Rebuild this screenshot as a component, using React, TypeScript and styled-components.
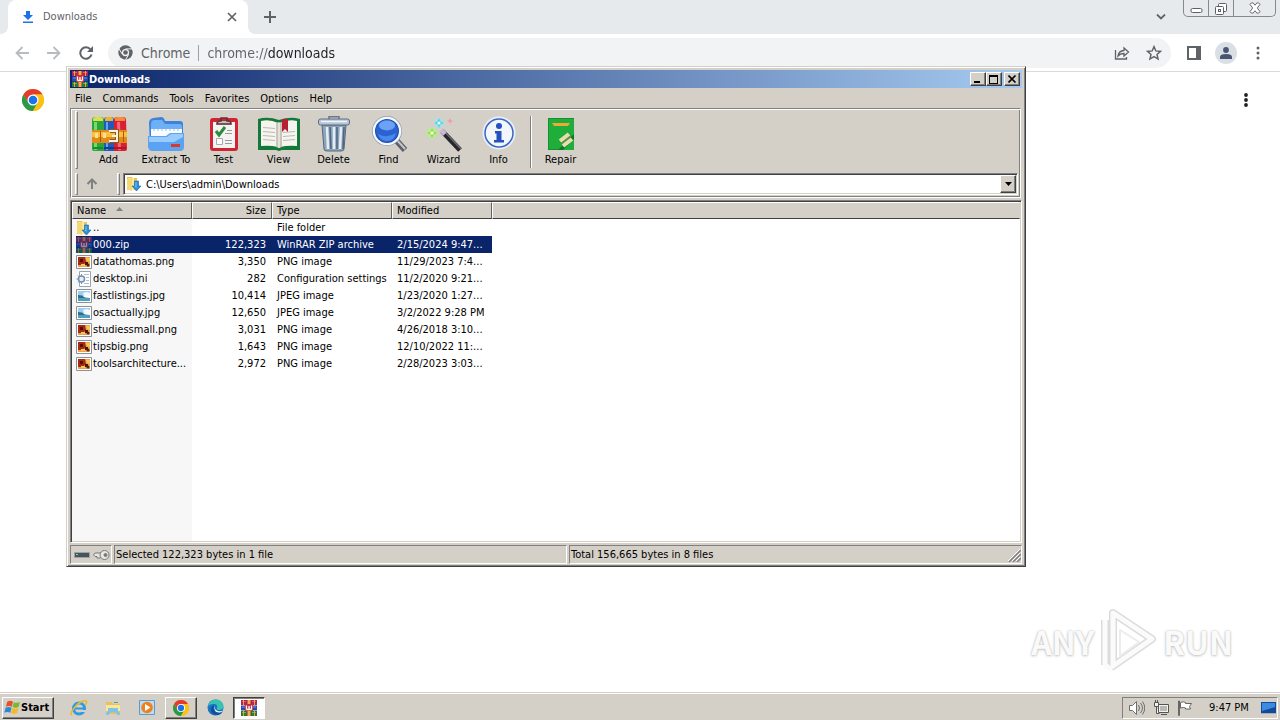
import React from "react";
import styled, { createGlobalStyle, css } from "styled-components";

const uiFont = `Tahoma, "DejaVu Sans Condensed", "DejaVu Sans", sans-serif`;

const GlobalStyle = createGlobalStyle`
  *, *::before, *::after { box-sizing: border-box; }
  body { margin: 0; background: #fff; font-family: ${uiFont}; font-size: 11px; line-height: 14px; color: #000; }
  button, input { font: inherit; color: inherit; margin: 0; padding: 0; border: 0; background: none; }
  svg { display: block; flex: none; }
`;

/* ---------- shared bevels ---------- */

const raised = css`
  border: 1px solid;
  border-color: #fff #404040 #404040 #fff;
  box-shadow: inset -1px -1px 0 #808080;
  background: #d4d0c8;
`;

const sunken = css`
  border: 1px solid;
  border-color: #808080 #fff #fff #808080;
`;

/* ---------- desktop ---------- */

const Desktop = styled.div`
  position: relative;
  display: flex;
  flex-direction: column;
  min-height: 100vh;
  overflow: hidden;
`;

/* ---------- browser ---------- */

const Browser = styled.main`
  flex: 1;
  display: flex;
  flex-direction: column;
`;

const TabStrip = styled.div`
  display: flex;
  align-items: flex-start;
  height: 34px;
  padding-left: 8px;
  background: #e7eaed;
`;

const Tab = styled.div`
  position: relative;
  display: flex;
  align-items: center;
  width: 240px;
  height: 34px;
  padding: 0 8px 0 14px;
  gap: 9px;
  border-radius: 8px 8px 0 0;
  background: #fff;
  color: #5f6368;
  &::before,
  &::after {
    content: "";
    position: absolute;
    bottom: 0;
    width: 8px;
    height: 8px;
  }
  &::before {
    left: -8px;
    background: radial-gradient(circle at 0 0, transparent 8px, #fff 8px);
  }
  &::after {
    right: -8px;
    background: radial-gradient(circle at 100% 0, transparent 8px, #fff 8px);
  }
`;

const TabTitle = styled.span`
  flex: 1;
  font-size: 11px;
`;

const IconButton = styled.button<{ $w?: number; $h?: number }>`
  display: flex;
  align-items: center;
  justify-content: center;
  width: ${(p) => p.$w ?? 16}px;
  height: ${(p) => p.$h ?? 16}px;
`;

const Spacer = styled.div`
  flex: 1;
`;

const WindowControls = styled.div`
  display: flex;
  width: 93px;
  height: 17px;
  margin: 0 4px 0 14px;
  border: 1px solid #85898d;
  border-top: 0;
  border-radius: 0 0 5px 5px;
`;

const WindowControl = styled.button<{ $grow?: number }>`
  flex: ${(p) => p.$grow ?? 25} 1 0;
  display: flex;
  align-items: center;
  justify-content: center;
  & + & {
    border-left: 1px solid #85898d;
  }
`;

const AddressRow = styled.div`
  display: flex;
  align-items: center;
  height: 38px;
  padding: 0 10px;
  gap: 8px;
  border-bottom: 1px solid #d9dadc;
`;

const Omnibox = styled.label`
  flex: 1;
  display: flex;
  align-items: center;
  height: 30px;
  margin: 0 3px 0 2px;
  padding: 0 5px 0 10px;
  gap: 8px;
  border-radius: 15px;
  background: #f1f3f4;
  color: #5f6368;
  font-size: 14px;
  line-height: 18px;
`;

const OmniDivider = styled.span`
  width: 1px;
  height: 16px;
  background: #9aa0a6;
`;

const UrlInput = styled.input`
  flex: 1;
  min-width: 0;
  height: 20px;
  outline: 0;
  color: transparent;
  background: linear-gradient(to right, #5f6368 61px, #202124 61px);
  background-clip: text;
  -webkit-background-clip: text;
`;

const Avatar = styled.span`
  display: flex;
  align-items: center;
  justify-content: center;
  width: 22px;
  height: 22px;
  border-radius: 50%;
  background: #dadfe6;
`;

const PageHeader = styled.header`
  display: flex;
  align-items: center;
  justify-content: space-between;
  height: 56px;
  padding: 0 26px 0 22px;
`;

/* ---------- WinRAR window ---------- */

const AppWindow = styled.section`
  position: absolute;
  left: 66px;
  top: 66px;
  width: 75vw;
  min-width: 640px;
  padding: 3px 3px 2px;
  border: 1px solid;
  border-color: #d4d0c8 #404040 #404040 #d4d0c8;
  box-shadow: inset 1px 1px 0 #fff, inset -1px -1px 0 #808080;
  background: #d4d0c8;
`;

const TitleBar = styled.header`
  display: flex;
  align-items: center;
  height: 18px;
  padding: 0 2px 0 2px;
  background: linear-gradient(to right, #0a246a, #a6caf0);
  color: #fff;
`;

const WindowTitle = styled.h1`
  flex: 1;
  margin: 0;
  padding: 2px 0 0 1px;
  font-size: 11px;
  line-height: 16px;
  font-weight: 700;
`;

const CaptionButton = styled.button<{ $gap?: boolean }>`
  ${raised}
  display: flex;
  align-items: center;
  justify-content: center;
  width: 16px;
  height: 14px;
  margin-left: ${(p) => (p.$gap ? 2 : 0)}px;
`;

const MenuBar = styled.nav`
  display: flex;
  height: 20px;
  padding-left: 5px;
  gap: 11px;
`;

const MenuItem = styled.button`
  height: 20px;
  padding-top: 1px;
`;

const Rebar = styled.div`
  margin-right: 1px;
  padding: 2px 2px 2px 4px;
  border: 1px solid #808080;
  border-right-color: #fff;
  border-bottom-color: #fff;
  box-shadow: inset 1px 1px 0 #fff, inset -1px -1px 0 #808080;
`;

const Band = styled.div`
  display: flex;
`;

const Grip = styled.span<{ $h: number }>`
  width: 3px;
  height: ${(p) => p.$h}px;
  border: 1px solid;
  border-color: #fff #808080 #808080 #fff;
`;

const Tools = styled.div`
  display: flex;
  height: 62px;
  padding: 5px 0 0 3px;
`;

const ToolButton = styled.button<{ $w?: number }>`
  display: flex;
  flex-direction: column;
  align-items: center;
  gap: 1px;
  width: ${(p) => p.$w ?? 55}px;
  height: 51px;
  white-space: nowrap;
`;

const ToolSeparator = styled.span`
  width: 2px;
  height: 52px;
  margin: 0 1px 0 4px;
  border-left: 1px solid #808080;
  border-right: 1px solid #fff;
`;

const UpButton = styled.button`
  display: flex;
  align-items: center;
  justify-content: center;
  width: 28px;
  height: 22px;
  margin-right: 11px;
`;

const PathBox = styled.div`
  flex: 1;
  display: flex;
  align-items: center;
  height: 22px;
  margin-left: 3px;
  padding: 1px 1px 1px 2px;
  gap: 3px;
  ${sunken}
  box-shadow: inset 1px 1px 0 #404040, inset -1px -1px 0 #d4d0c8;
  background: #fff;
`;

const PathInput = styled.input`
  flex: 1;
  height: 16px;
  padding-left: 1px;
  padding-top: 1px;
  outline: 0;
`;

const DropButton = styled.button`
  ${raised}
  display: flex;
  align-items: center;
  justify-content: center;
  width: 16px;
  height: 18px;
`;

const ListPane = styled.div`
  height: 343px;
  margin-top: 2px;
  padding: 1px;
  border: 1px solid;
  border-color: #808080 #fff #fff #808080;
  box-shadow: inset 1px 1px 0 #404040, inset -1px -1px 0 #d4d0c8;
  background: linear-gradient(to right, #f7f7f7 121px, #fff 121px);
`;

const FileTable = styled.table`
  width: 100%;
  table-layout: fixed;
  border-collapse: separate;
  border-spacing: 0;
`;

const HeadCell = styled.th<{ $right?: boolean }>`
  height: 17px;
  padding: 1px 5px 0 4px;
  font-weight: 400;
  line-height: 14px;
  text-align: ${(p) => (p.$right ? "right" : "left")};
  background: #d4d0c8;
  border: 1px solid;
  border-color: #fff #606060 #404040 #fff;
  svg {
    display: inline-block;
    margin: 0 0 3px 10px;
  }
  &:last-child {
    border-right-color: #d4d0c8;
  }
`;

const Row = styled.tr<{ $selected?: boolean }>`
  ${(p) =>
    p.$selected &&
    css`
      color: #fff;
      td:not(:last-child) {
        background: #0a246a;
      }
      td:first-child {
        background: linear-gradient(to right, transparent 4px, #0a246a 4px);
      }
    `}
`;

const Cell = styled.td<{ $right?: boolean }>`
  height: 17px;
  padding: 1px ${(p) => (p.$right ? 6 : 3)}px 0 5px;
  line-height: 16px;
  overflow: hidden;
  text-overflow: ellipsis;
  white-space: nowrap;
  text-align: ${(p) => (p.$right ? "right" : "left")};
`;

const NameCell = styled(Cell)`
  padding: 0 4px;
`;

const FileName = styled.span`
  display: flex;
  align-items: center;
  gap: 1px;
  height: 17px;
  span {
    padding-top: 1px;
    overflow: hidden;
    text-overflow: ellipsis;
  }
`;

const StatusBar = styled.footer`
  display: flex;
  height: 21px;
  padding-top: 2px;
  gap: 2px;
`;

const StatusPanel = styled.div<{ $w?: number }>`
  ${sunken}
  flex: ${(p) => (p.$w ? `0 0 ${p.$w}px` : "1 1 0")};
  display: flex;
  align-items: center;
  justify-content: space-between;
  height: 19px;
  padding: 1px 0 0 1px;
`;

const StatusIcons = styled(StatusPanel)`
  justify-content: flex-start;
  gap: 3px;
  padding: 0 0 0 3px;
`;

/* ---------- watermark ---------- */

const Watermark = styled.div`
  position: absolute;
  right: 47px;
  bottom: 46px;
  display: flex;
  align-items: center;
  gap: 5px;
  font-family: "Noto Sans CJK JP", "Liberation Sans", sans-serif;
  font-size: 32px;
  line-height: 66px;
  font-weight: 700;
  color: #fafafa;
  text-shadow: 0 0 2px #bbb, 0 1px 3px #ccc;
`;

/* ---------- taskbar ---------- */

const Taskbar = styled.footer`
  display: flex;
  align-items: center;
  height: 28px;
  padding: 2px 2px 0;
  border-top: 1px solid #d4d0c8;
  box-shadow: inset 0 1px 0 #fff;
  background: #d4d0c8;
`;

const StartButton = styled.button`
  ${raised}
  display: flex;
  align-items: center;
  width: 52px;
  height: 22px;
  margin-right: 9px;
  padding-left: 1px;
  font-weight: 700;
`;

const TaskButton = styled.button<{ $state?: "open" | "active" }>`
  display: flex;
  align-items: center;
  justify-content: center;
  width: 32px;
  height: 22px;
  margin-right: 2px;
  ${(p) => p.$state === "open" && raised}
  ${(p) =>
    p.$state === "active" &&
    css`
      border: 1px solid;
      border-color: #404040 #fff #fff #404040;
      box-shadow: inset 1px 1px 0 #808080;
      background: #fff;
    `}
`;

const Tray = styled.div`
  ${sunken}
  display: flex;
  align-items: center;
  width: 156px;
  height: 22px;
  padding: 0 0 0 6px;
  gap: 8px;
`;

const Clock = styled.time`
  flex: 1;
  padding-left: 8px;
  white-space: nowrap;
`;

/* ---------- icons ---------- */

const ChromeLogo = ({ size }: { size: number }) => (
  <svg width={size} height={size} viewBox="0 0 24 24">
    <circle cx="12" cy="12" r="12" fill="#fbc116" />
    <path d="M12 6h10.4A12 12 0 0 0 1.6 6l5.2 9Z" fill="#e33b2e" />
    <path d="M1.6 6A12 12 0 0 0 12 24l5.2-9L12 12 6.8 15Z" fill="#2a9a48" />
    <path d="M12 24A12 12 0 0 0 22.4 6H12l5.2 9Z" fill="#fbc116" />
    <circle cx="12" cy="12" r="6" fill="#fff" />
    <circle cx="12" cy="12" r="4.7" fill="#1a73e8" />
  </svg>
);

const ChromeMono = () => (
  <svg width="15" height="15" viewBox="0 0 24 24">
    <circle cx="12" cy="12" r="11.5" fill="#5f6368" />
    <circle cx="12" cy="12" r="5.8" fill="#f1f3f4" />
    <circle cx="12" cy="12" r="3.7" fill="#5f6368" />
    <path d="M12 6.2h11M7 15 1.6 6M17 15l-5 9" stroke="#f1f3f4" strokeWidth="1.6" />
  </svg>
);

const Dots = ({ color, r, step }: { color: string; r: number; step: number }) => (
  <svg width="16" height="16" viewBox="0 0 16 16" fill={color}>
    <circle cx="8" cy={8 - step} r={r} />
    <circle cx="8" cy="8" r={r} />
    <circle cx="8" cy={8 + step} r={r} />
  </svg>
);

const WinRar = ({ dark }: { dark?: boolean }) => (
  <svg width="16" height="16" viewBox="0 0 16 16">
    <path fill="#b2225a" d="M0 0h16v5H0z" />
    <path fill="#2b49b0" d="M0 5.5h16v5H0z" />
    <path fill="#257a35" d="M0 11h16v5H0z" />
    <path fill="#e05a8a" d="M1 1h4v1H1zM11 1h4v1h-4z" />
    <path fill="#6d8bea" d="M1 6.5h3v1H1zM12 6.5h3v1h-3z" />
    <path fill="#62b85e" d="M1 12h4v1H1zM11 12h4v1h-4z" />
    <path fill="#f0a62c" d="M2 0h1v5H2zM13 0h1v5h-1zM2 11h1v5H2zM13 11h1v5h-1z" />
    <path fill="#d8642e" d="M6 0h4v16H6z" />
    <path fill="#f2b04a" d="M7 0h2v16H7z" />
    <rect x="4" y="4" width="8" height="7" rx="1" fill="#c22f35" />
    <path d="M5.5 5.5v4M8 6v4M10.5 5.5v4M5.5 9.5h5" stroke="#fff" strokeWidth="1.3" fill="none" />
    {dark && <path fill="#0a246a" opacity=".5" d="M0 0h16v16H0z" />}
  </svg>
);

const FolderDown = () => (
  <svg width="16" height="16" viewBox="0 0 16 16">
    <path fill="#e9c553" d="M1 1h5l1 1h4v12H1z" />
    <path fill="#fbe799" d="M2 2h6v12H2z" />
    <path fill="#f5d873" d="M1 3l5-1v13l-5-2z" />
    <path fill="#2b8fd6" stroke="#1668a8" strokeWidth=".6" d="M8.5 5h4v5H15l-4.500 5L6 10h2.500z" />
    <path fill="#7cc4f2" d="M9.500 6h1v6l-2-2h1z" />
  </svg>
);

const PngIcon = () => (
  <svg width="16" height="16" viewBox="0 0 16 16">
    <path fill="#fff" stroke="#8b9199" d="M.5 1.5h15v13H.5z" />
    <path fill="#e9a05a" d="M2 3h12v10H2z" />
    <path fill="#a8290f" d="M2 3h7l1 5-3 3H2z" />
    <path fill="#4c1408" d="M4 5h3v3H4zM9 8h3v3H9z" />
    <path fill="#f6c94e" d="M10 4h4v4l-3-1zM5 10h4v2H5z" />
    <circle cx="12" cy="11" r="1.5" fill="#54210c" />
  </svg>
);

const JpgIcon = () => (
  <svg width="16" height="16" viewBox="0 0 16 16">
    <path fill="#fff" stroke="#8b9199" d="M.5 1.5h15v13H.5z" />
    <path fill="#9fcdf0" d="M2 3h12v5H2z" />
    <path fill="#f4fafc" d="M7 5l4-1 3 1v3H8z" />
    <path fill="#2d6f8e" d="M2 7l4 .5 3 2 5 .5v1H2z" />
    <path fill="#4fa0bd" d="M2 10h12v3H2z" />
  </svg>
);

const IniIcon = () => (
  <svg width="16" height="16" viewBox="0 0 16 16">
    <path fill="#fff" stroke="#98a4b0" d="M3.5.5h11v15h-11z" />
    <path stroke="#a9bfd5" d="M8 3.5h5M10 6.5h3M10 9.5h3M8 12.5h5" />
    <circle cx="5.5" cy="8" r="3" fill="#e8f0f7" stroke="#6f8fae" strokeWidth="1.5" />
    <path stroke="#6f8fae" d="M5.5 3v2M5.5 11v2M.5 8h2M2 4.5 3.5 6M2 11.500 3.500 10" />
  </svg>
);

const AddIcon = () => (
  <svg width="36" height="36" viewBox="0 0 36 36">
    <path fill="#2ba63c" d="M1 4q0-3 3-3h6q3 0 3 3v31H3q-2 0-2-2z" />
    <path fill="#77d96a" d="M3 6h3v28H3z" />
    <path fill="#2359b8" d="M13 4q0-3 3-3h4q3 0 3 3v31H13z" />
    <path fill="#63a4ee" d="M15 6h2v28h-2z" />
    <path fill="#d81f33" d="M23 4q0-3 3-3h6q3 0 3 3l1 29q0 2-2 2H23z" />
    <path fill="#f5677a" d="M26 6h3l1 28h-3z" />
    <path fill="#d9e04a" d="M2 3q0-2 3-2h4q3 0 3 2v2H2z" />
    <path fill="#f0b030" d="M14 3q0-2 2-2h4q2 0 2 2v2h-8z" />
    <path fill="#f78d3a" d="M24 3q0-2 2-2h5q3 0 3 2v2H24z" />
    <path fill="#e48a16" d="M1 14h35v13H1z" />
    <path fill="#f9bf44" d="M1 16h35v5H1z" />
    <path fill="#fbe08a" d="M4 17h3v5H4zM12 17h3v5h-3z" />
    <path fill="#a85a0b" d="M9 15h1v11H9zM32 15h1v11h-1z" />
    <path fill="none" stroke="#8a5a24" strokeWidth="4" d="M19 15h7v10h-7" />
    <path fill="none" stroke="#f8f2e0" strokeWidth="2" d="M18 15h8v10h-8M21 20h6" />
    <path fill="#1c8a2c" d="M2 31h10v2H2z" />
    <path fill="#153e8a" d="M13 31h10v2H13z" />
    <path fill="#b01527" d="M23 31h12v2H23z" />
  </svg>
);

const ExtractIcon = () => (
  <svg width="38" height="36" viewBox="0 0 38 36">
    <path fill="#3d83dc" d="M2 7q0-4 4-5l8-1q3 0 4 4h15q3 0 3 3v22H3z" />
    <path fill="#6db0f5" d="M4 8q0-4 4-4h7l3 4h15q2 0 2 3v5H4z" />
    <path fill="#f8fbff" d="M4 13h31v8H4z" />
    <path stroke="#a8bdd8" strokeWidth="1" d="M7 13v2M11 13v2M15 13v2M19 13v2M23 13v2M27 13v2M31 13v2" />
    <path fill="#5ba3f2" d="M1 20h18l4-3h14v14q0 4-4 4H5q-3 0-4-4z" />
    <path fill="#9accfb" d="M2 21h18l4-3h12v3l-9 5H2z" />
    <rect x="24" y="28" width="9" height="3" fill="#d8392b" />
  </svg>
);

const TestIcon = () => (
  <svg width="30" height="36" viewBox="0 0 30 36">
    <rect x="1" y="2" width="28" height="33" rx="3" fill="#cf2434" />
    <path fill="#f3f3f2" d="M4 6h22v26H4z" />
    <path fill="#bfc0c2" d="M7 9q0-4 3-4h10q3 0 3 4z" />
    <path fill="none" stroke="#5d3438" strokeWidth="1.5" d="M8 8q0-3 3-3h1V2h6v3h1q3 0 3 3z" />
    <path fill="none" stroke="#2c8b3c" strokeWidth="3" d="m7 15 3 4 6-8" />
    <path fill="#fff" stroke="#aaa" d="M7.5 22.5h6v6h-6z" />
    <path stroke="#9a9a9a" d="M16 17.5h7M18 14.5h5M16 24.5h7M16 27.5h7" />
  </svg>
);

const ViewIcon = () => (
  <svg width="42" height="36" viewBox="0 0 42 36">
    <path fill="#13793a" d="M0 3q10-3 21 1 11-4 21-1v31H24l-3 1-3-1H0z" />
    <path fill="#f6f4ee" d="M3 5q9-2 17 2v24q-8-2-17-1z" />
    <path fill="#f6f4ee" d="M39 5q-9-2-17 2v24q8-2 17-1z" />
    <path fill="#c9c4b8" d="M18 6l3 1 3-1v25l-3 1-3-1z" />
    <path stroke="#fff" d="M21 6v26" />
    <path fill="none" stroke="#b9b9b5" d="M5 11.500l12 1M5 15.500l12 1M5 19.500l12 1M5 23.500l12 1M25 16.500l12-1M25 20.500l12-1M25 24.500l12-1" />
    <path fill="#b62030" d="M24 3h6v13l-3-3-3 3z" />
  </svg>
);

const DeleteIcon = () => (
  <svg width="34" height="36" viewBox="0 0 34 36">
    <path fill="none" stroke="#6b7789" strokeWidth="1.5" d="M12 3V.8h10V3" />
    <path fill="#8fa5bc" stroke="#56687e" d="M5 9h24l-2 24q0 2-3 2H10q-3 0-3-2z" />
    <path stroke="#e3edf6" strokeWidth="2.5" d="m10 11 1 22M17 11v22M24 11l-1 22" />
    <path stroke="#50647d" strokeWidth="1.5" d="m13 11 1 22M20 11v22M27 11l-1 22" />
    <rect x="1.5" y="3" width="31" height="6" rx="2" fill="#b7c5d4" stroke="#5c6d82" />
    <path stroke="#eff5fa" strokeWidth="1.5" d="M4 5.500h26" />
  </svg>
);

const FindIcon = () => (
  <svg width="36" height="36" viewBox="0 0 36 36">
    <path stroke="#5c6066" strokeWidth="6" d="m25 24 9 10" />
    <path stroke="#c4c8cb" strokeWidth="2" d="m25 23 9 10" />
    <circle cx="16" cy="15" r="15" fill="#8d9db4" />
    <circle cx="16" cy="15" r="14.3" fill="#f6f9fc" />
    <circle cx="16" cy="15" r="12" fill="#1d4fb5" />
    <circle cx="16" cy="15" r="11" fill="#2a62d2" />
    <ellipse cx="16" cy="9.500" rx="8" ry="5" fill="#6ba2f4" />
    <path fill="#4a88ec" d="M7 18q9 5 18-1-2 8-9 8T7 18z" />
  </svg>
);

const WizardIcon = () => (
  <svg width="36" height="36" viewBox="0 0 36 36">
    <circle cx="13" cy="7" r="5" fill="#92e7f2" opacity=".6" />
    <path fill="#52d3ea" d="m13 2 1.5 3.5L18 7l-3.500 1.500L13 12l-1.500-3.500L8 7l3.500-1.500z" />
    <circle cx="6" cy="17" r="5.500" fill="#b6ef86" opacity=".8" />
    <path fill="#8bdc46" d="m6 12 1.500 3.500L11 17l-3.500 1.500L6 22l-1.500-3.500L1 17l3.500-1.500z" />
    <circle cx="6" cy="17" r="1.800" fill="#f2ffe0" />
    <circle cx="13" cy="7" r="1.500" fill="#f0feff" />
    <path fill="#f49ba4" d="m24 2 1 2 2 1-2 1-1 2-1-2-2-1 2-1z" />
    <path stroke="#27252c" strokeWidth="5" d="m16 15 18 19" />
    <path stroke="#6d6974" strokeWidth="1.5" d="m17 14 18 19" />
    <path stroke="#c9b7d3" strokeWidth="5" d="m15 14 4 4" />
  </svg>
);

const InfoIcon = () => (
  <svg width="34" height="36" viewBox="0 0 34 36">
    <circle cx="17" cy="17" r="16.5" fill="#e8effa" />
    <circle cx="17" cy="17" r="14" fill="#f2f6fd" stroke="#3a68c0" strokeWidth="1.5" />
    <circle cx="17" cy="10" r="3" fill="#2451bd" />
    <path fill="#2451bd" d="M13 15h6.500v9H22v2.500H12V24h2.500v-6.500H13z" />
  </svg>
);

const RepairIcon = () => (
  <svg width="26" height="36" viewBox="0 0 26 36">
    <path fill="#1fae3a" d="M0 2h26v32H0z" />
    <path fill="#149030" d="M0 2h26v1H0zM0 33h26v1H0zM0 3h1v30H0z" />
    <path fill="#0d7a24" d="m10 34 16-16v16z" />
    <path fill="#1fae3a" d="m15 34 11-11v11z" />
    <path fill="#f0a83a" d="M4 7h18l-2 3H6z" />
    <path stroke="#e8dcb0" strokeWidth="4" d="m12 25 9-7M15 30l9-7" />
    <path stroke="#8d7b3e" strokeWidth="1" d="m13 28 10-8" />
  </svg>
);

const WindowsFlag = () => (
  <svg width="17" height="17" viewBox="0 0 16 16">
    <path fill="#e5532a" d="M3 2.5q3-1.500 5.500 0L7.300 7.200q-2.600-1.400-5.500 0z" />
    <path fill="#79b82c" d="M9.300 3q2.700 1.200 5.700-.2L13.700 7.500q-2.800 1.300-5.600 0z" />
    <path fill="#2f87d8" d="M1.500 8.200q2.900-1.500 5.600 0l-1.200 4.700q-2.700-1.400-5.600 0z" />
    <path fill="#f6b922" d="M7.900 8.500q2.700 1.300 5.600 0l-1.200 4.700q-2.900 1.300-5.600 0z" />
  </svg>
);

const IeIcon = () => (
  <svg width="18" height="18" viewBox="0 0 18 18">
    <circle cx="9" cy="9.500" r="5.500" fill="none" stroke="#2f9be2" strokeWidth="3" />
    <path fill="#d4d0c8" d="M10 11h7v2h-7z" />
    <path fill="#2f9be2" d="M5 8.500h10.500v2H5z" />
    <path fill="none" stroke="#e8b931" strokeWidth="1.5" d="M2 16Q-1 15 5 8T16 2q2 1-1 4" />
  </svg>
);

const ExplorerIcon = () => (
  <svg width="18" height="18" viewBox="0 0 18 18">
    <path fill="#e4c25c" d="M2 3h6l1 2h7v10H2z" />
    <path fill="#f9e6a0" d="M2 6h14v6H2z" />
    <path fill="#7fc3e8" d="M4 9h10v3q2 1 2 4h-3q0-3-4-3t-4 3H2q0-3 2-4z" />
    <path fill="#5aa55f" d="M10 3h4v1h-4z" />
  </svg>
);

const MediaIcon = () => (
  <svg width="17" height="17" viewBox="0 0 17 17">
    <path fill="#bcdcf2" stroke="#5d9cca" d="M.5 1.500h15v14H.5z" />
    <circle cx="8" cy="8.500" r="5.800" fill="#f0801c" />
    <path fill="#fff" d="m6 5 5.500 3.500L6 12z" />
  </svg>
);

const EdgeIcon = () => (
  <svg width="17" height="17" viewBox="0 0 17 17">
    <circle cx="8.500" cy="8.500" r="8" fill="#1a73c7" />
    <path fill="#37c2b1" d="M.7 8Q2 1 9 .6q7 .4 7.500 6.900-.5 3.500-4.500 3.500-3 0-2-2 1-4-3-4Q2 5 .7 8z" />
    <path fill="#124f96" d="M7 6q-4 2-3 6t7 4q3-.6 4.500-3-4 1.500-7-1T7 6z" />
    <path fill="#e6f4f8" d="M8 7q-1 4 3 5 3 .6 5-.5-1 1.500-3 2Q8 14 7.500 10 7 8 8 7z" />
  </svg>
);

const line = { fill: "none", stroke: "#5f6368" };

/* ---------- data ---------- */

const menus = ["File", "Commands", "Tools", "Favorites", "Options", "Help"];

const tools = [
  { label: "Add", icon: <AddIcon /> },
  { label: "Extract To", icon: <ExtractIcon />, w: 60 },
  { label: "Test", icon: <TestIcon /> },
  { label: "View", icon: <ViewIcon /> },
  { label: "Delete", icon: <DeleteIcon /> },
  { label: "Find", icon: <FindIcon /> },
  { label: "Wizard", icon: <WizardIcon /> },
  { label: "Info", icon: <InfoIcon /> },
];

const files = [
  { name: "..", size: "", type: "File folder", date: "", icon: <FolderDown /> },
  { name: "000.zip", size: "122,323", type: "WinRAR ZIP archive", date: "2/15/2024 9:47...", icon: <WinRar dark />, selected: true },
  { name: "datathomas.png", size: "3,350", type: "PNG image", date: "11/29/2023 7:4...", icon: <PngIcon /> },
  { name: "desktop.ini", size: "282", type: "Configuration settings", date: "11/2/2020 9:21...", icon: <IniIcon /> },
  { name: "fastlistings.jpg", size: "10,414", type: "JPEG image", date: "1/23/2020 1:27...", icon: <JpgIcon /> },
  { name: "osactually.jpg", size: "12,650", type: "JPEG image", date: "3/2/2022 9:28 PM", icon: <JpgIcon /> },
  { name: "studiessmall.png", size: "3,031", type: "PNG image", date: "4/26/2018 3:10...", icon: <PngIcon /> },
  { name: "tipsbig.png", size: "1,643", type: "PNG image", date: "12/10/2022 11:...", icon: <PngIcon /> },
  { name: "toolsarchitecture...", size: "2,972", type: "PNG image", date: "2/28/2023 3:03...", icon: <PngIcon /> },
];

/* ---------- views ---------- */

function BrowserView() {
  return (
    <Browser>
      <TabStrip>
        <Tab>
          <svg width="12" height="12" viewBox="0 0 12 12" fill="#1a73e8">
            <path d="M4 0h4v4h3L6 9 1 4h3zM1 10.500h10V12H1z" />
          </svg>
          <TabTitle>Downloads</TabTitle>
          <IconButton aria-label="Close tab">
            <svg width="10" height="10" viewBox="0 0 10 10" {...line} strokeWidth="1.7">
              <path d="m1 1 8 8M9 1 1 9" />
            </svg>
          </IconButton>
        </Tab>
        <IconButton aria-label="New tab" $w={44} $h={34}>
          <svg width="12" height="12" viewBox="0 0 12 12" {...line} strokeWidth="2">
            <path d="M6 0v12M0 6h12" />
          </svg>
        </IconButton>
        <Spacer />
        <IconButton aria-label="Search tabs" $w={16} $h={34}>
          <svg width="10" height="6" viewBox="0 0 10 6" {...line} strokeWidth="1.8">
            <path d="m1 .5 4 4 4-4" />
          </svg>
        </IconButton>
        <WindowControls>
          <WindowControl aria-label="Minimize">
            <svg width="13" height="16" viewBox="0 0 13 16">
              <rect x="1" y="8.500" width="11" height="4" rx="1.500" fill="#fff" stroke="#5c6066" />
            </svg>
          </WindowControl>
          <WindowControl aria-label="Restore">
            <svg width="14" height="15" viewBox="0 0 14 15" fill="#fff" stroke="#5c6066">
              <rect x="4.500" y="2.500" width="8" height="8" rx="1" />
              <rect x="1.500" y="5.500" width="8" height="8" rx="1" />
              <rect x="4.500" y="8.500" width="2" height="2" />
            </svg>
          </WindowControl>
          <WindowControl aria-label="Close" $grow={42}>
            <svg width="12" height="12" viewBox="0 0 13 13" fill="#fff" stroke="#5c6066">
              <path d="M1 2.500 2.500 1h2l2 2.500 2-2.500h2L12 2.500 9 6.500l3 4-1.500 1.500h-2l-2-2.500-2 2.500h-2L1 10.500l3-4z" />
            </svg>
          </WindowControl>
        </WindowControls>
      </TabStrip>
      <AddressRow>
        <IconButton aria-label="Back" $w={24}>
          <svg width="14" height="14" viewBox="0 0 14 14" fill="none" stroke="#b9bcbf" strokeWidth="1.8">
            <path d="M14 7H1.500M7.500 1l-6 6 6 6" />
          </svg>
        </IconButton>
        <IconButton aria-label="Forward" $w={24}>
          <svg width="14" height="14" viewBox="0 0 14 14" fill="none" stroke="#b9bcbf" strokeWidth="1.8">
            <path d="M0 7h12.500M6.500 1l6 6-6 6" />
          </svg>
        </IconButton>
        <IconButton aria-label="Reload" $w={24}>
          <svg width="14" height="14" viewBox="0 0 14 14" {...line} strokeWidth="2">
            <path d="M11.500 3.500A5.700 5.700 0 1 0 12.500 8.500" />
            <path d="M14 0v6H8z" fill="#5f6368" stroke="none" />
          </svg>
        </IconButton>
        <Omnibox>
          <ChromeMono />
          <span>Chrome</span>
          <OmniDivider />
          <UrlInput aria-label="Address" defaultValue="chrome://downloads" />
          <IconButton aria-label="Share" $w={24}>
            <svg width="16" height="16" viewBox="0 0 16 16" {...line} strokeWidth="1.3">
              <path d="M1.500 5v9h11v-2M4 11q.5-5 6-5.500V3l4.500 4-4.500 4V8.500Q6 8.500 4 11z" />
            </svg>
          </IconButton>
          <IconButton aria-label="Bookmark" $w={24}>
            <svg width="16" height="16" viewBox="0 0 24 24" {...line} strokeWidth="2.2">
              <path d="m12 2.500 2.800 6.400 7 .7-5.300 4.600 1.600 6.900L12 17.500l-6.100 3.600 1.600-6.900L2.200 9.600l7-.7z" />
            </svg>
          </IconButton>
        </Omnibox>
        <IconButton aria-label="Side panel" $w={24}>
          <svg width="14" height="14" viewBox="0 0 14 14">
            <path fill="#fff" stroke="#5f6368" strokeWidth="2" d="M1 1h12v12H1z" />
            <path fill="#5f6368" d="M9 0h5v14H9z" />
          </svg>
        </IconButton>
        <IconButton aria-label="Profile" $w={24} $h={24}>
          <Avatar>
            <svg width="12" height="12" viewBox="0 0 12 12" fill="#4a5573">
              <circle cx="6" cy="3" r="2.900" />
              <path d="M0 12v-2q0-3 6-3t6 3v2z" />
            </svg>
          </Avatar>
        </IconButton>
        <IconButton aria-label="Browser menu" $w={24}>
          <Dots color="#5f6368" r={1.5} step={5} />
        </IconButton>
      </AddressRow>
      <PageHeader>
        <ChromeLogo size={22} />
        <IconButton aria-label="More actions">
          <Dots color="#202124" r={1.9} step={5} />
        </IconButton>
      </PageHeader>
    </Browser>
  );
}

function ArchiverWindow() {
  return (
    <AppWindow>
      <TitleBar>
        <WinRar />
        <WindowTitle>Downloads</WindowTitle>
        <CaptionButton aria-label="Minimize">
          <svg width="8" height="8" viewBox="0 0 8 8">
            <path d="M0 6h6v2H0z" />
          </svg>
        </CaptionButton>
        <CaptionButton aria-label="Maximize">
          <svg width="10" height="9" viewBox="0 0 10 9">
            <path d="M0 0h9v9H0zM1 2v6h7V2z" fillRule="evenodd" />
          </svg>
        </CaptionButton>
        <CaptionButton aria-label="Close" $gap>
          <svg width="9" height="8" viewBox="0 0 9 8">
            <path d="m.5.5 7 7M7.500.5l-7 7" stroke="#000" strokeWidth="1.6" />
          </svg>
        </CaptionButton>
      </TitleBar>
      <MenuBar>
        {menus.map((m) => (
          <MenuItem key={m}>{m}</MenuItem>
        ))}
      </MenuBar>
      <Rebar>
        <Band>
          <Grip $h={58} />
          <Tools>
            {tools.map((t) => (
              <ToolButton key={t.label} $w={t.w}>
                {t.icon}
                {t.label}
              </ToolButton>
            ))}
            <ToolSeparator />
            <ToolButton>
              <RepairIcon />
              Repair
            </ToolButton>
          </Tools>
        </Band>
        <Band>
          <Grip $h={22} />
          <UpButton aria-label="Up one level">
            <svg width="12" height="12" viewBox="0 0 12 12" fill="none" stroke="#808080" strokeWidth="2">
              <path d="M6 11V1.500M1.500 6 6 1.500 10.500 6" />
            </svg>
          </UpButton>
          <Grip $h={22} />
          <PathBox>
            <FolderDown />
            <PathInput aria-label="Path" defaultValue="C:\Users\admin\Downloads" />
            <DropButton aria-label="Show paths">
              <svg width="7" height="4" viewBox="0 0 7 4">
                <path d="M0 0h7L3.500 4z" />
              </svg>
            </DropButton>
          </PathBox>
        </Band>
      </Rebar>
      <ListPane>
        <FileTable>
          <colgroup>
            <col style={{ width: 120 }} />
            <col style={{ width: 80 }} />
            <col style={{ width: 120 }} />
            <col style={{ width: 100 }} />
            <col />
          </colgroup>
          <thead>
            <tr>
              <HeadCell>
                Name
                <svg width="7" height="4" viewBox="0 0 7 4">
                  <path d="M0 4h7L3.500 0z" fill="#808080" />
                </svg>
              </HeadCell>
              <HeadCell $right>Size</HeadCell>
              <HeadCell>Type</HeadCell>
              <HeadCell>Modified</HeadCell>
              <HeadCell aria-hidden="true" />
            </tr>
          </thead>
          <tbody>
            {files.map((f) => (
              <Row key={f.name} $selected={f.selected}>
                <NameCell>
                  <FileName>
                    {f.icon}
                    <span>{f.name}</span>
                  </FileName>
                </NameCell>
                <Cell $right>{f.size}</Cell>
                <Cell>{f.type}</Cell>
                <Cell>{f.date}</Cell>
                <Cell />
              </Row>
            ))}
          </tbody>
        </FileTable>
      </ListPane>
      <StatusBar>
        <StatusIcons $w={42}>
          <svg width="16" height="8" viewBox="0 0 16 8">
            <path fill="#46545b" stroke="#9aa4a8" d="M.5 1.500h15v5H.5z" />
            <path fill="#9ec7ae" d="M2 3h2v1H2z" />
          </svg>
          <svg width="17" height="12" viewBox="0 0 17 12" fill="#e8e8e6" stroke="#777">
            <path d="M8 4H2L.5 6 2 7.500h2V9h3l2-1" />
            <circle cx="11.500" cy="6" r="4.500" />
            <circle cx="12.500" cy="6" r="1.500" fill="#777" />
          </svg>
        </StatusIcons>
        <StatusPanel>Selected 122,323 bytes in 1 file</StatusPanel>
        <StatusPanel>
          Total 156,665 bytes in 8 files
          <svg width="13" height="13" viewBox="0 0 13 13">
            <path d="M1 13 13 1M5 13l8-8M9 13l4-4" stroke="#808080" strokeWidth="1.5" />
            <path d="M0 12 12 0M4 12l8-8M8 12l4-4" stroke="#fff" strokeWidth="1" />
          </svg>
        </StatusPanel>
      </StatusBar>
    </AppWindow>
  );
}

function TaskbarView() {
  return (
    <Taskbar>
      <StartButton>
        <WindowsFlag />
        Start
      </StartButton>
      <TaskButton aria-label="Internet Explorer">
        <IeIcon />
      </TaskButton>
      <TaskButton aria-label="Explorer">
        <ExplorerIcon />
      </TaskButton>
      <TaskButton aria-label="Media Player">
        <MediaIcon />
      </TaskButton>
      <TaskButton aria-label="Chrome" $state="open">
        <ChromeLogo size={16} />
      </TaskButton>
      <TaskButton aria-label="Edge">
        <EdgeIcon />
      </TaskButton>
      <TaskButton aria-label="WinRAR" $state="active">
        <WinRar />
      </TaskButton>
      <Spacer />
      <Tray>
        <svg width="16" height="16" viewBox="0 0 16 16" fill="#fff" stroke="#6e6e6e">
          <path d="M.5 5.500h3l4-4v13l-4-4h-3z" />
          <path fill="none" d="M9.500 5q2 3 0 6M11.500 3q4 5 0 10M13.500 1.500q4.500 6.500 0 13" />
        </svg>
        <svg width="16" height="16" viewBox="0 0 16 16" fill="#f2f2f0" stroke="#555">
          <path d="M5.500 4.500h10v8h-10zM8 14.500h6M1.500 2.500h4v4h-4zM3.500 7v6.500h3M2.500 0v2M4.500 0v2" />
          <path fill="#b8b8b4" d="M7 6h7v5H7z" stroke="none" />
        </svg>
        <svg width="16" height="16" viewBox="0 0 16 16" fill="#fff" stroke="#666">
          <path d="M1.500 1v14.500h1V1z" />
          <path d="M3.500 2.500q3-1.500 5 0v1h6l-2 3 1 2.500h-5V8q-2-1-5 0z" />
        </svg>
        <Clock>9:47 PM</Clock>
        <svg width="17" height="16" viewBox="0 0 17 16">
          <path fill="#144a9a" d="M1 2h15v11H1z" />
          <path fill="#3c8be0" d="M2 3h13v4L2 11z" />
          <path fill="#9db0c4" d="M1 13h15v1H1z" />
        </svg>
      </Tray>
    </Taskbar>
  );
}

export default function App() {
  return (
    <Desktop>
      <GlobalStyle />
      <BrowserView />
      <Watermark>
        <span>ANY</span>
        <svg width="59" height="66" viewBox="0 0 57 66" fill="none" strokeLinejoin="round">
          <g stroke="#dcdcdc" strokeWidth="8">
            <path d="M13 5 52 31 13 58z" />
            <path d="M5 12v45" />
          </g>
          <g stroke="#fbfbfb" strokeWidth="5">
            <path d="M13 5 52 31 13 58z" />
            <path d="M5 12v45l7 5" />
          </g>
          <path d="M20 22v26l19-14z" fill="#fff" stroke="#ececec" strokeWidth="2" />
        </svg>
        <span>RUN</span>
      </Watermark>
      <ArchiverWindow />
      <TaskbarView />
    </Desktop>
  );
}
